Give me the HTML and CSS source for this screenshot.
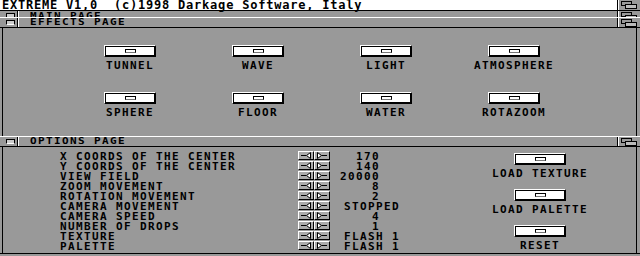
FILE: index.html
```html
<!DOCTYPE html>
<html lang="en">
<head>
    <meta charset="UTF-8">
    <title>EXTREME V1,0</title>
    <link rel="stylesheet" href="styles.css">
</head>
<body>
    <div class="screenbar">
        <span class="scr-title">EXTREME V1,0  (c)1998 Darkage Software, Italy</span>
        <span class="depth"><svg width="16" height="8" viewBox="0 0 16 8"><rect x="0.5" y="0.5" width="10" height="4" fill="#999" stroke="#000"/><rect x="4.5" y="3.5" width="11" height="4" fill="#bbb" stroke="#000"/></svg></span>
    </div>

    <div class="bar bar-main">
        <span class="close"><i></i></span>
        <span class="name">MAIN PAGE</span>
        <span class="depth"><svg width="16" height="8" viewBox="0 0 16 8"><rect x="0.5" y="0.5" width="10" height="4" fill="#999" stroke="#000"/><rect x="4.5" y="3.5" width="11" height="4" fill="#bbb" stroke="#000"/></svg></span>
    </div>

    <div class="bar">
        <span class="close"><i></i></span>
        <span class="name">EFFECTS PAGE</span>
        <span class="depth"><svg width="16" height="8" viewBox="0 0 16 8"><rect x="0.5" y="0.5" width="10" height="4" fill="#999" stroke="#000"/><rect x="4.5" y="3.5" width="11" height="4" fill="#bbb" stroke="#000"/></svg></span>
    </div>

    <div class="body effects">
        <div class="cell"><span class="btn"><i class="handle"></i></span><span class="label">TUNNEL</span></div>
        <div class="cell"><span class="btn"><i class="handle"></i></span><span class="label">WAVE</span></div>
        <div class="cell"><span class="btn"><i class="handle"></i></span><span class="label">LIGHT</span></div>
        <div class="cell"><span class="btn"><i class="handle"></i></span><span class="label">ATMOSPHERE</span></div>
        <div class="cell"><span class="btn"><i class="handle"></i></span><span class="label">SPHERE</span></div>
        <div class="cell"><span class="btn"><i class="handle"></i></span><span class="label">FLOOR</span></div>
        <div class="cell"><span class="btn"><i class="handle"></i></span><span class="label">WATER</span></div>
        <div class="cell"><span class="btn"><i class="handle"></i></span><span class="label">ROTAZOOM</span></div>
    </div>

    <div class="bar">
        <span class="close"><i></i></span>
        <span class="name">OPTIONS PAGE</span>
        <span class="depth"><svg width="16" height="8" viewBox="0 0 16 8"><rect x="0.5" y="0.5" width="10" height="4" fill="#999" stroke="#000"/><rect x="4.5" y="3.5" width="11" height="4" fill="#bbb" stroke="#000"/></svg></span>
    </div>

    <div class="body options">
        <div class="rows" id="rows"></div>
        <div class="side">
            <div class="cell"><span class="btn"><i class="handle"></i></span><span class="label">LOAD TEXTURE</span></div>
            <div class="cell"><span class="btn"><i class="handle"></i></span><span class="label">LOAD PALETTE</span></div>
            <div class="cell"><span class="btn"><i class="handle"></i></span><span class="label">RESET</span></div>
        </div>
    </div>
    <div class="bottom"></div>

    <script>
        const opciones = [
            { nombre: "X COORDS OF THE CENTER", valor: "170" },
            { nombre: "Y COORDS OF THE CENTER", valor: "140" },
            { nombre: "VIEW FIELD", valor: "20000" },
            { nombre: "ZOOM MOVEMENT", valor: "8" },
            { nombre: "ROTATION MOVEMENT", valor: "2" },
            { nombre: "CAMERA MOVEMENT", valor: "STOPPED", texto: true },
            { nombre: "CAMERA SPEED", valor: "4" },
            { nombre: "NUMBER OF DROPS", valor: "1" },
            { nombre: "TEXTURE", valor: "FLASH 1", texto: true },
            { nombre: "PALETTE", valor: "FLASH 1", texto: true }
        ];

        const izq = '<svg width="12" height="7" viewBox="0 0 12 7"><path d="M1 3.5H6" stroke="#000"/><path d="M6.5 3.5L10.5 0.5V6.5Z" fill="#fff" stroke="#000"/></svg>';
        const der = '<svg width="12" height="7" viewBox="0 0 12 7"><path d="M5.5 3.5H11" stroke="#000"/><path d="M5.5 3.5L1.5 0.5V6.5Z" fill="#fff" stroke="#000"/></svg>';

        const rows = document.getElementById("rows");
        opciones.forEach(op => {
            rows.innerHTML += `<div class="row"><span class="opt">${op.nombre}</span><span class="arrows"><span class="arr">${izq}</span><span class="arr">${der}</span></span><span class="val${op.texto ? " txt" : ""}">${op.valor}</span></div>`;
        });
    </script>
</body>
</html>
```

FILE: styles.css
```css
* {
    margin: 0;
    padding: 0;
    box-sizing: border-box;
}
body {
    width: 640px;
    height: 256px;
    overflow: hidden;
    background-color: #999;
    color: #000;
    font-family: "DejaVu Sans Mono", monospace;
    font-weight: bold;
    font-size: 11px;
    letter-spacing: 1.38px;
    white-space: nowrap;
}
.screenbar {
    height: 11px;
    background: #fff;
    border-bottom: 1px solid #000;
    display: flex;
}
.scr-title {
    padding-left: 2px;
    font-size: 12px;
    letter-spacing: 0.78px;
    line-height: 10px;
    white-space: pre;
}
.depth {
    margin-left: auto;
    width: 23px;
    background: #999;
    border-left: 1px solid #000;
    box-shadow: inset 1px 0 0 #fff;
    display: flex;
    align-items: center;
    justify-content: center;
}
.bar {
    height: 11px;
    border-top: 1px solid #fff;
    border-bottom: 1px solid #000;
    display: flex;
}
.bar-main {
    height: 6px;
    border-top: none;
    border-bottom: none;
    overflow: hidden;
    align-items: flex-start;
}
.bar-main .close, .bar-main .depth {
    height: 9px;
}
.bar-main .name {
    margin-top: 1px;
}
.close {
    width: 18px;
    padding-left: 3px;
    border-right: 1px solid #000;
    box-shadow: 1px 0 0 #fff;
    display: flex;
    align-items: center;
    justify-content: center;
}
.close i {
    width: 9px;
    height: 5px;
    border: 1px solid #000;
    border-bottom-color: #fff;
    background: #ccc;
}
.name {
    display: inline-block;
    padding-left: 12px;
    line-height: 9px;
    transform: scaleY(0.85);
}
.body {
    margin: 0 3px 0 2px;
    border-left: 1px solid #000;
    border-right: 1px solid #000;
}
.effects {
    height: 108px;
    padding: 17px 0 0 63px;
    display: grid;
    grid-template-columns: repeat(4, 128px);
    row-gap: 22px;
    align-content: start;
}
.cell {
    display: flex;
    flex-direction: column;
    align-items: center;
    gap: 4px;
}
.btn {
    width: 52px;
    height: 12px;
    background: #fff;
    border: 1px solid;
    border-color: #fff #000 #000 #fff;
    box-shadow: inset 0 0 0 1px #000;
    display: flex;
    align-items: center;
    justify-content: center;
}
.handle {
    width: 11px;
    height: 4px;
    border: 1px solid #000;
    border-bottom-color: #777;
    background: #fff;
}
.label {
    line-height: 9px;
}
.options {
    height: 106px;
    padding: 4px 0 0 57px;
    display: flex;
}
.row {
    display: flex;
    height: 10px;
}
.opt {
    width: 238px;
    padding-top: 1px;
    line-height: 9px;
}
.arrows {
    display: flex;
    width: 32px;
    height: 9px;
}
.arr {
    width: 16px;
    height: 9px;
    background: #aaa;
    border: 1px solid;
    border-color: #fff #000 #000 #fff;
    display: flex;
    align-items: center;
    justify-content: center;
}
.val {
    width: 70px;
    padding: 1px 20px 0 0;
    line-height: 9px;
    text-align: right;
}
.val.txt {
    padding-right: 0;
}
.side {
    width: 120px;
    margin-left: 80px;
    padding-top: 2px;
    display: flex;
    flex-direction: column;
    gap: 11px;
}
.bottom {
    height: 2px;
    border-top: 1px solid #000;
}
```
